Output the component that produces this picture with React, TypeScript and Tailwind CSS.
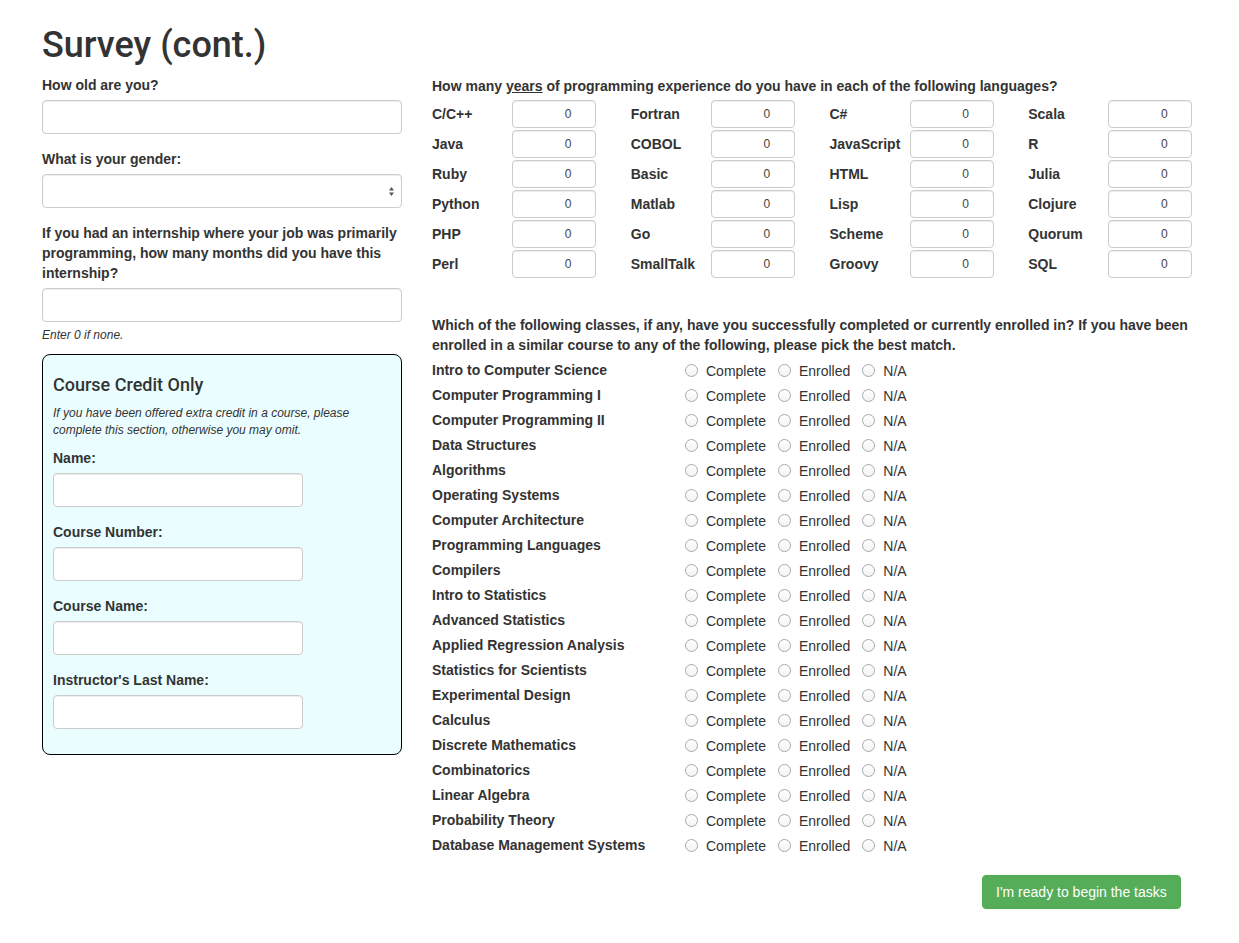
import React from 'react';

const languages: string[][] = [
  ['C/C++', 'Fortran', 'C#', 'Scala'],
  ['Java', 'COBOL', 'JavaScript', 'R'],
  ['Ruby', 'Basic', 'HTML', 'Julia'],
  ['Python', 'Matlab', 'Lisp', 'Clojure'],
  ['PHP', 'Go', 'Scheme', 'Quorum'],
  ['Perl', 'SmallTalk', 'Groovy', 'SQL'],
];

const classes = [
  'Intro to Computer Science',
  'Computer Programming I',
  'Computer Programming II',
  'Data Structures',
  'Algorithms',
  'Operating Systems',
  'Computer Architecture',
  'Programming Languages',
  'Compilers',
  'Intro to Statistics',
  'Advanced Statistics',
  'Applied Regression Analysis',
  'Statistics for Scientists',
  'Experimental Design',
  'Calculus',
  'Discrete Mathematics',
  'Combinatorics',
  'Linear Algebra',
  'Probability Theory',
  'Database Management Systems',
];

const inputCls =
  'block h-[34px] rounded-[4px] border border-[#ccc] bg-white shadow-[inset_0_1px_1px_rgba(0,0,0,0.075)]';

const Field: React.FC<{ label: React.ReactNode; wide?: boolean; children?: React.ReactNode }> = ({
  label,
  wide = true,
  children,
}) => (
  <div className="mb-[15px]">
    <label className="block mb-[5px] font-bold text-[14px] leading-[20px]">{label}</label>
    {children ?? <input type="text" className={`${inputCls} ${wide ? 'w-[360px]' : 'w-[250px]'}`} />}
  </div>
);

const Radio: React.FC<{ label: string }> = ({ label }) => (
  <span className="flex items-center gap-[8px] mr-[12px]">
    <span className="inline-block w-[13px] h-[13px] rounded-full border border-[#a9a9a9] bg-gradient-to-b from-white to-[#f3f3f3]" />
    <span className="text-[14px] leading-[20px] font-normal">{label}</span>
  </span>
);

export default function App() {
  return (
    <div
      className="min-h-[943px] bg-white pl-[42px] text-[#333]"
      style={{ fontFamily: '"Liberation Sans", Arial, sans-serif' }}
    >
      <h1
        className="pt-[25px] text-[36px] leading-[40px] font-medium"
        style={{ fontFamily: 'Roboto, "Liberation Sans", sans-serif' }}
      >
        Survey (cont.)
      </h1>

      <div className="mt-[10px] flex gap-[30px]">
        {/* left column */}
        <div className="w-[360px] shrink-0">
          <Field label="How old are you?" />
          <Field label="What is your gender:">
            <div className={`${inputCls} w-[360px] relative`}>
              <svg
                className="absolute right-[6px] top-[11px]"
                width="7"
                height="11"
                viewBox="0 0 7 11"
              >
                <path d="M3.5 1 L6 4.5 L1 4.5 Z" fill="#555" />
                <path d="M3.5 10 L6 6.5 L1 6.5 Z" fill="#555" />
              </svg>
            </div>
          </Field>
          <div className="mb-[10px]">
            <label className="block mb-[5px] font-bold text-[14px] leading-[20px]">
              If you had an internship where your job was primarily programming, how many months did you have
              this internship?
            </label>
            <input type="text" className={`${inputCls} w-[360px]`} />
            <p className="mt-[5px] text-[12px] leading-[17px] italic">Enter 0 if none.</p>
          </div>

          <div className="mt-[10px] rounded-[8px] border border-black bg-[#ebfeff] px-[10px] pt-[10px] pb-[10px]">
            <h4
              className="mt-[10px] mb-[10px] text-[18px] leading-[20px] font-medium"
              style={{ fontFamily: 'Roboto, "Liberation Sans", sans-serif' }}
            >
              Course Credit Only
            </h4>
            <p className="mb-[9px] text-[12px] leading-[17px] italic">
              If you have been offered extra credit in a course, please complete this section, otherwise you may
              omit.
            </p>
            <Field label="Name:" wide={false} />
            <Field label="Course Number:" wide={false} />
            <Field label="Course Name:" wide={false} />
            <Field label="Instructor's Last Name:" wide={false} />
          </div>
        </div>

        {/* right column */}
        <div className="w-[795px] shrink-0">
          <p className="mt-[1px] mb-[3px] font-bold text-[14px] leading-[20px]">
            How many <span className="underline">years</span> of programming experience do you have in each of the
            following languages?
          </p>
          <div className="grid grid-cols-4">
            {languages.map((row) =>
              row.map((lang) => (
                <div key={lang} className="flex h-[30px] items-center">
                  <span className="w-[80px] font-bold text-[14px] leading-[20px]">{lang}</span>
                  <input
                    type="text"
                    readOnly
                    value="0"
                    className="h-[28px] w-[84px] rounded-[4px] border border-[#ccc] bg-white pl-[28px] text-center text-[12px] text-[#444] shadow-[inset_0_1px_1px_rgba(0,0,0,0.075)]"
                  />
                </div>
              ))
            )}
          </div>

          <p className="mt-[36px] font-bold text-[14px] leading-[20px] w-[760px]">
            Which of the following classes, if any, have you successfully completed or currently enrolled in? If
            you have been enrolled in a similar course to any of the following, please pick the best match.
          </p>
          <div className="mt-[3px]">
            {classes.map((c) => (
              <div key={c} className="flex h-[25px] items-center">
                <span className="w-[253px] font-bold text-[14px] leading-[20px] -mt-[2px]">{c}</span>
                <Radio label="Complete" />
                <Radio label="Enrolled" />
                <Radio label="N/A" />
              </div>
            ))}
          </div>

          <div className="mt-[17px] pl-[550px]">
            <button className="h-[34px] rounded-[4px] border border-[#4cae4c] bg-[#55ad59] px-[13px] text-[14px] leading-[20px] text-white">
              I'm ready to begin the tasks
            </button>
          </div>
        </div>
      </div>
    </div>
  );
}
